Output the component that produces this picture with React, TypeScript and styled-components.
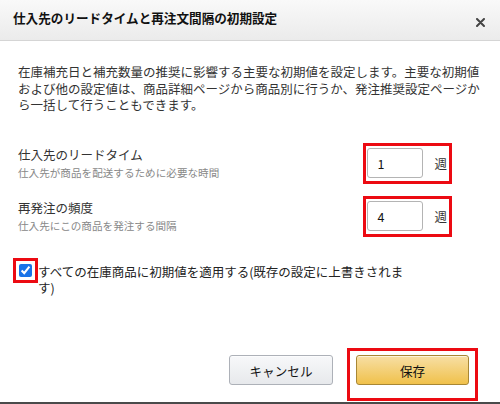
import * as React from "react";
import styled, { createGlobalStyle } from "styled-components";

const GlobalStyle = createGlobalStyle`
  html, body {
    margin: 0;
    padding: 0;
    background: #ffffff;
  }
  body {
    font-family: "Noto Sans CJK JP", "Liberation Sans", sans-serif;
    color: #333;
  }
`;

const Modal = styled.div`
  display: flex;
  flex-direction: column;
  width: 500px;
  height: 404px;
  box-sizing: border-box;
  border-bottom: 2px solid #4a4a4a;
  background: #fff;
`;

const Header = styled.div`
  display: flex;
  justify-content: space-between;
  align-items: flex-start;
  box-sizing: border-box;
  height: 41px;
  padding: 8px 14px 0 13px;
  background: linear-gradient(to bottom, #f9f9f9, #ebebeb);
  border-bottom: 1px solid #d5d5d5;
`;

const Title = styled.h1`
  margin: 0;
  font-size: 12.6px;
  line-height: 20px;
  font-weight: 700;
  color: #111;
`;

const CloseButton = styled.button`
  display: flex;
  width: 10px;
  height: 10px;
  margin-top: 10px;
  padding: 0;
  border: 0;
  background: transparent;
  cursor: pointer;
`;

const Body = styled.div`
  flex: 1;
  padding: 23px 18px 0 18px;
`;

const Description = styled.p`
  margin: 0 0 29px;
  font-size: 12.5px;
  line-height: 16.5px;
  color: #333;
`;

const FieldRow = styled.div`
  display: flex;
  justify-content: space-between;
  align-items: center;
  padding-right: 30px;
  margin-bottom: 12px;
`;

const FieldText = styled.div`
  display: flex;
  flex-direction: column;
`;

const FieldLabel = styled.span`
  font-size: 12.5px;
  line-height: 18px;
  color: #333;
`;

const FieldHint = styled.span`
  margin-top: 1px;
  font-size: 10.6px;
  line-height: 16px;
  color: #888;
`;

// red annotation frame drawn round the parts the screenshot points at
const Highlight = styled.div<{ $pad: string; $height?: string }>`
  display: flex;
  align-items: center;
  height: ${(p) => p.$height ?? "auto"};
  border: 3px solid #ec0a12;
  padding: ${(p) => p.$pad};
`;

const NumberInput = styled.input`
  width: 56px;
  height: 30px;
  box-sizing: border-box;
  border: 1px solid #b4b4b4;
  border-radius: 3px;
  padding: 0 9px;
  font-family: inherit;
  font-size: 12.5px;
  color: #111;
  outline: none;
`;

const Unit = styled.span`
  margin-left: 11px;
  font-size: 12.5px;
  color: #333;
`;

const CheckRow = styled.div`
  display: flex;
  align-items: flex-start;
  margin: 21px 0 0 -5px;
`;

const CheckBox = styled.input`
  width: 13px;
  height: 13px;
  margin: 0;
  accent-color: #1a73e8;
`;

const CheckLabel = styled.label`
  max-width: 372px;
  margin-top: 6px;
  font-size: 12.5px;
  line-height: 16px;
  color: #222;
`;

const Footer = styled.div`
  display: flex;
  justify-content: flex-end;
  align-items: flex-start;
  gap: 14px;
  padding: 0 22px 1px 0;
`;

const Button = styled.button<{ $primary?: boolean }>`
  height: 30px;
  width: ${(p) => (p.$primary ? "113px" : "104px")};
  margin-top: ${(p) => (p.$primary ? "0" : "7px")};
  border-radius: 3px;
  border: 1px solid ${(p) => (p.$primary ? "#a88734" : "#adb1b8")};
  background: ${(p) =>
    p.$primary
      ? "linear-gradient(to bottom, #f7dfa5, #f0c14b)"
      : "linear-gradient(to bottom, #f7f8fa, #e7e9ec)"};
  box-shadow: 0 1px 0 rgba(255, 255, 255, 0.6) inset;
  font-family: inherit;
  font-size: 12.6px;
  color: #111;
  cursor: pointer;
`;

const fields = [
  { label: "仕入先のリードタイム", hint: "仕入先が商品を配送するために必要な時間", value: "1" },
  { label: "再発注の頻度", hint: "仕入先にこの商品を発注する間隔", value: "4" },
];

export default function App() {
  return (
    <>
      <GlobalStyle />
      <Modal>
        <Header>
          <Title>仕入先のリードタイムと再注文間隔の初期設定</Title>
          <CloseButton aria-label="閉じる">
            <svg width="9" height="9" viewBox="0 0 9 9">
              <path d="M1 1 L8 8 M8 1 L1 8" stroke="#444" strokeWidth="2" strokeLinecap="round" />
            </svg>
          </CloseButton>
        </Header>
        <Body>
          <Description>
            在庫補充日と補充数量の推奨に影響する主要な初期値を設定します。主要な初期値および他の設定値は、商品詳細ページから商品別に行うか、発注推奨設定ページから一括して行うこともできます。
          </Description>
          {fields.map((f) => (
            <FieldRow key={f.label}>
              <FieldText>
                <FieldLabel>{f.label}</FieldLabel>
                <FieldHint>{f.hint}</FieldHint>
              </FieldText>
              <Highlight $pad="0 2px 0 1px" $height="35px">
                <NumberInput defaultValue={f.value} />
                <Unit>週</Unit>
              </Highlight>
            </FieldRow>
          ))}
          <CheckRow>
            <Highlight $pad="3px">
              <CheckBox type="checkbox" id="apply-all" defaultChecked />
            </Highlight>
            <CheckLabel htmlFor="apply-all">
              すべての在庫商品に初期値を適用する(既存の設定に上書きされます)
            </CheckLabel>
          </CheckRow>
        </Body>
        <Footer>
          <Button>キャンセル</Button>
          <Highlight $pad="4px 6px 13px">
            <Button $primary>保存</Button>
          </Highlight>
        </Footer>
      </Modal>
    </>
  );
}
